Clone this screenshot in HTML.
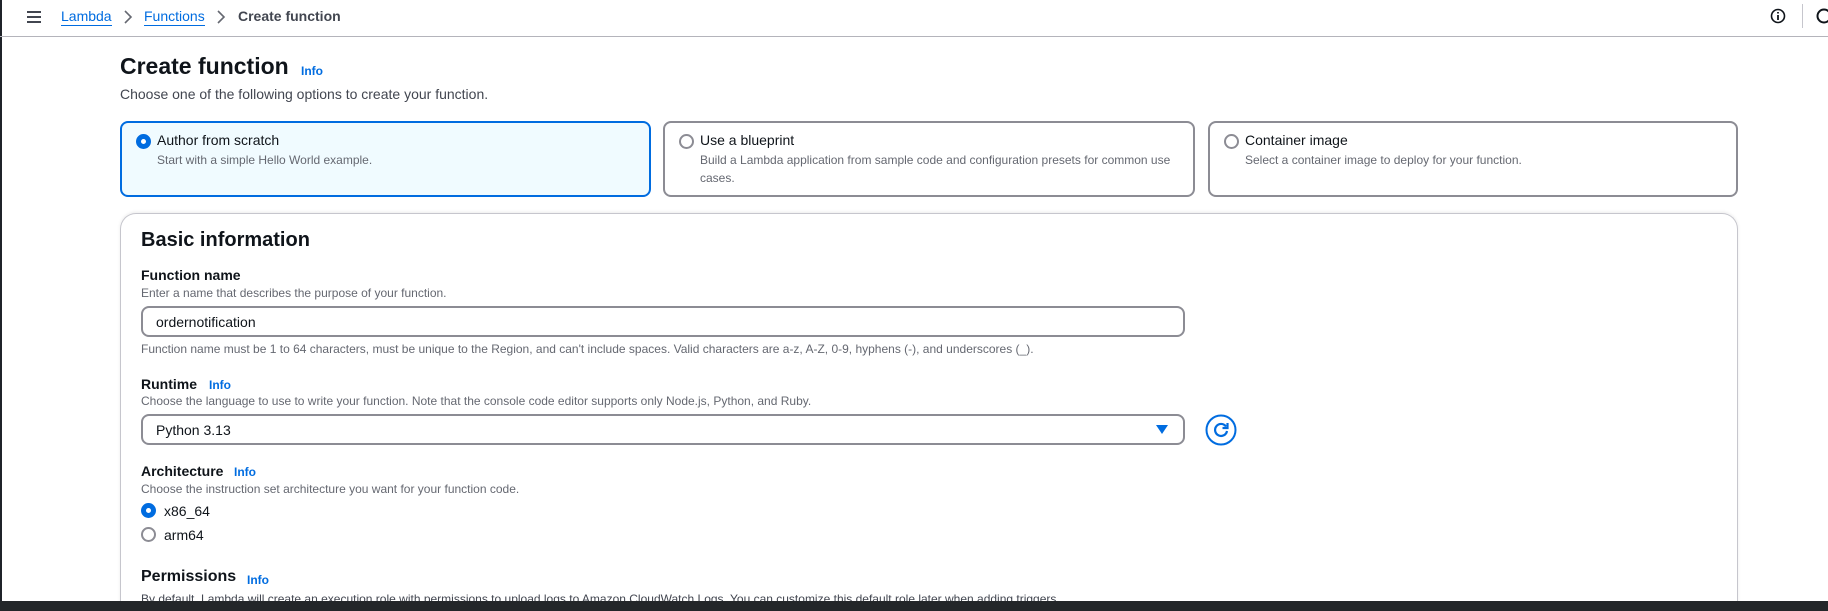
<!DOCTYPE html>
<html style="overflow:hidden;width:1828px;height:611px"><head><meta charset="utf-8"><style>
*{box-sizing:border-box;margin:0;padding:0}
body{width:1828px;height:611px;overflow:hidden;background:#fff;font-family:"Liberation Sans",sans-serif;color:#0f141a;position:relative}
.a{position:absolute;white-space:nowrap}
.blue{color:#006ce0}
.info{color:#006ce0;font-weight:bold;font-size:12px}
.lbl{font-weight:bold;font-size:14px}
.desc{font-size:12px;color:#656871}
.card{position:absolute;top:121px;height:76px;border:2px solid #8c8c94;border-radius:8px;background:#fff}
.card.sel{border-color:#006ce0;background:#f0fbff}
.rad{position:absolute;width:15px;height:15px;border-radius:50%;border:2px solid #8c8c94;background:#fff}
.rad.on{border:5px solid #006ce0}
.ct{position:absolute;left:35px;top:9px;font-size:14px}
.cd{position:absolute;left:35px;top:28px;font-size:12px;color:#656871;line-height:18px;white-space:normal}
.box{position:absolute;left:141px;width:1044px;height:31px;border:2px solid #8c8c94;border-radius:8px;font-size:14px;padding:6px 13px}
</style></head><body>
<div class="a" style="left:0;top:0;width:2px;height:611px;background:#1f2329"></div>
<div class="a" style="left:0;top:36px;width:1828px;height:1px;background:#b4b4bb"></div>
<svg class="a" style="left:26px;top:10px" width="16" height="14"><path d="M1 2h14M1 7h14M1 12h14" stroke="#424650" stroke-width="2"/></svg>
<div class="a blue" style="left:61px;top:8px;font-size:14px;border-bottom:1px solid #006ce0;line-height:17px">Lambda</div>
<svg class="a" style="left:123px;top:10px" width="10" height="14"><path d="M2 1l6 6-6 6" stroke="#656871" stroke-width="1.6" fill="none"/></svg>
<div class="a blue" style="left:144px;top:8px;font-size:14px;border-bottom:1px solid #006ce0;line-height:17px">Functions</div>
<svg class="a" style="left:216px;top:10px" width="10" height="14"><path d="M2 1l6 6-6 6" stroke="#656871" stroke-width="1.6" fill="none"/></svg>
<div class="a" style="left:238px;top:8px;font-size:14px;font-weight:bold;color:#424650;line-height:17px">Create function</div>
<svg class="a" style="left:1770px;top:8px" width="16" height="16"><circle cx="8" cy="8" r="6.5" stroke="#0f141a" stroke-width="1.6" fill="none"/><path d="M8 7v5M8 4v1.5" stroke="#0f141a" stroke-width="1.8"/></svg>
<div class="a" style="left:1802px;top:4px;width:1px;height:24px;background:#c6c6cd"></div>
<svg class="a" style="left:1816px;top:8px" width="16" height="16"><circle cx="8" cy="8" r="6.5" stroke="#0f141a" stroke-width="2" fill="none"/></svg>

<div class="a" style="left:120px;top:53px;font-size:23px;font-weight:bold">Create function</div>
<div class="a info" style="left:301px;top:64px">Info</div>
<div class="a" style="left:120px;top:86px;font-size:14px;color:#424650">Choose one of the following options to create your function.</div>

<div class="card sel" style="left:120px;width:531px"><div class="rad on" style="left:14px;top:11px"></div><div class="ct">Author from scratch</div><div class="cd">Start with a simple Hello World example.</div></div>
<div class="card" style="left:663px;width:532px"><div class="rad" style="left:14px;top:11px"></div><div class="ct">Use a blueprint</div><div class="cd" style="width:480px">Build a Lambda application from sample code and configuration presets for common use cases.</div></div>
<div class="card" style="left:1208px;width:530px"><div class="rad" style="left:14px;top:11px"></div><div class="ct">Container image</div><div class="cd">Select a container image to deploy for your function.</div></div>

<div class="a" style="left:120px;top:213px;width:1618px;height:398px;border:1px solid #c6c6cd;border-bottom:none;border-radius:16px 16px 0 0;box-shadow:0 -1px 3px rgba(0,0,0,.08)"></div>
<div class="a" style="left:141px;top:229px;font-size:20px;font-weight:bold">Basic information</div>
<div class="a lbl" style="left:141px;top:267px">Function name</div>
<div class="a desc" style="left:141px;top:286px">Enter a name that describes the purpose of your function.</div>
<div class="box" style="top:306px">ordernotification</div>
<div class="a desc" style="left:141px;top:342px">Function name must be 1 to 64 characters, must be unique to the Region, and can't include spaces. Valid characters are a-z, A-Z, 0-9, hyphens (-), and underscores (_).</div>

<div class="a lbl" style="left:141px;top:376px">Runtime</div><div class="a info" style="left:209px;top:378px">Info</div>
<div class="a desc" style="left:141px;top:394px">Choose the language to use to write your function. Note that the console code editor supports only Node.js, Python, and Ruby.</div>
<div class="box" style="top:414px">Python 3.13</div>
<svg class="a" style="left:1156px;top:425px" width="12" height="9"><path d="M0 0h12L6 9z" fill="#006ce0"/></svg>
<svg class="a" style="left:1205px;top:414px" width="32" height="32"><circle cx="16" cy="16" r="14.5" stroke="#006ce0" stroke-width="2" fill="none"/><path d="M21 12.5A6 6 0 1 0 22 17" stroke="#006ce0" stroke-width="2.2" fill="none"/><path d="M22.5 9v5h-5" stroke="#006ce0" stroke-width="2.2" fill="none"/></svg>

<div class="a lbl" style="left:141px;top:463px">Architecture</div><div class="a info" style="left:234px;top:465px">Info</div>
<div class="a desc" style="left:141px;top:482px">Choose the instruction set architecture you want for your function code.</div>
<div class="rad on a" style="left:141px;top:503px"></div><div class="a" style="left:164px;top:503px;font-size:14px">x86_64</div>
<div class="rad a" style="left:141px;top:527px"></div><div class="a" style="left:164px;top:527px;font-size:14px">arm64</div>

<div class="a" style="left:141px;top:568px;font-size:16px;font-weight:bold">Permissions</div><div class="a info" style="left:247px;top:573px">Info</div>
<div class="a desc" style="left:141px;top:592px;color:#424650">By default, Lambda will create an execution role with permissions to upload logs to Amazon CloudWatch Logs. You can customize this default role later when adding triggers.</div>

<div class="a" style="left:0;top:601px;width:1828px;height:10px;background:#232629;z-index:5"></div>
</body></html>
